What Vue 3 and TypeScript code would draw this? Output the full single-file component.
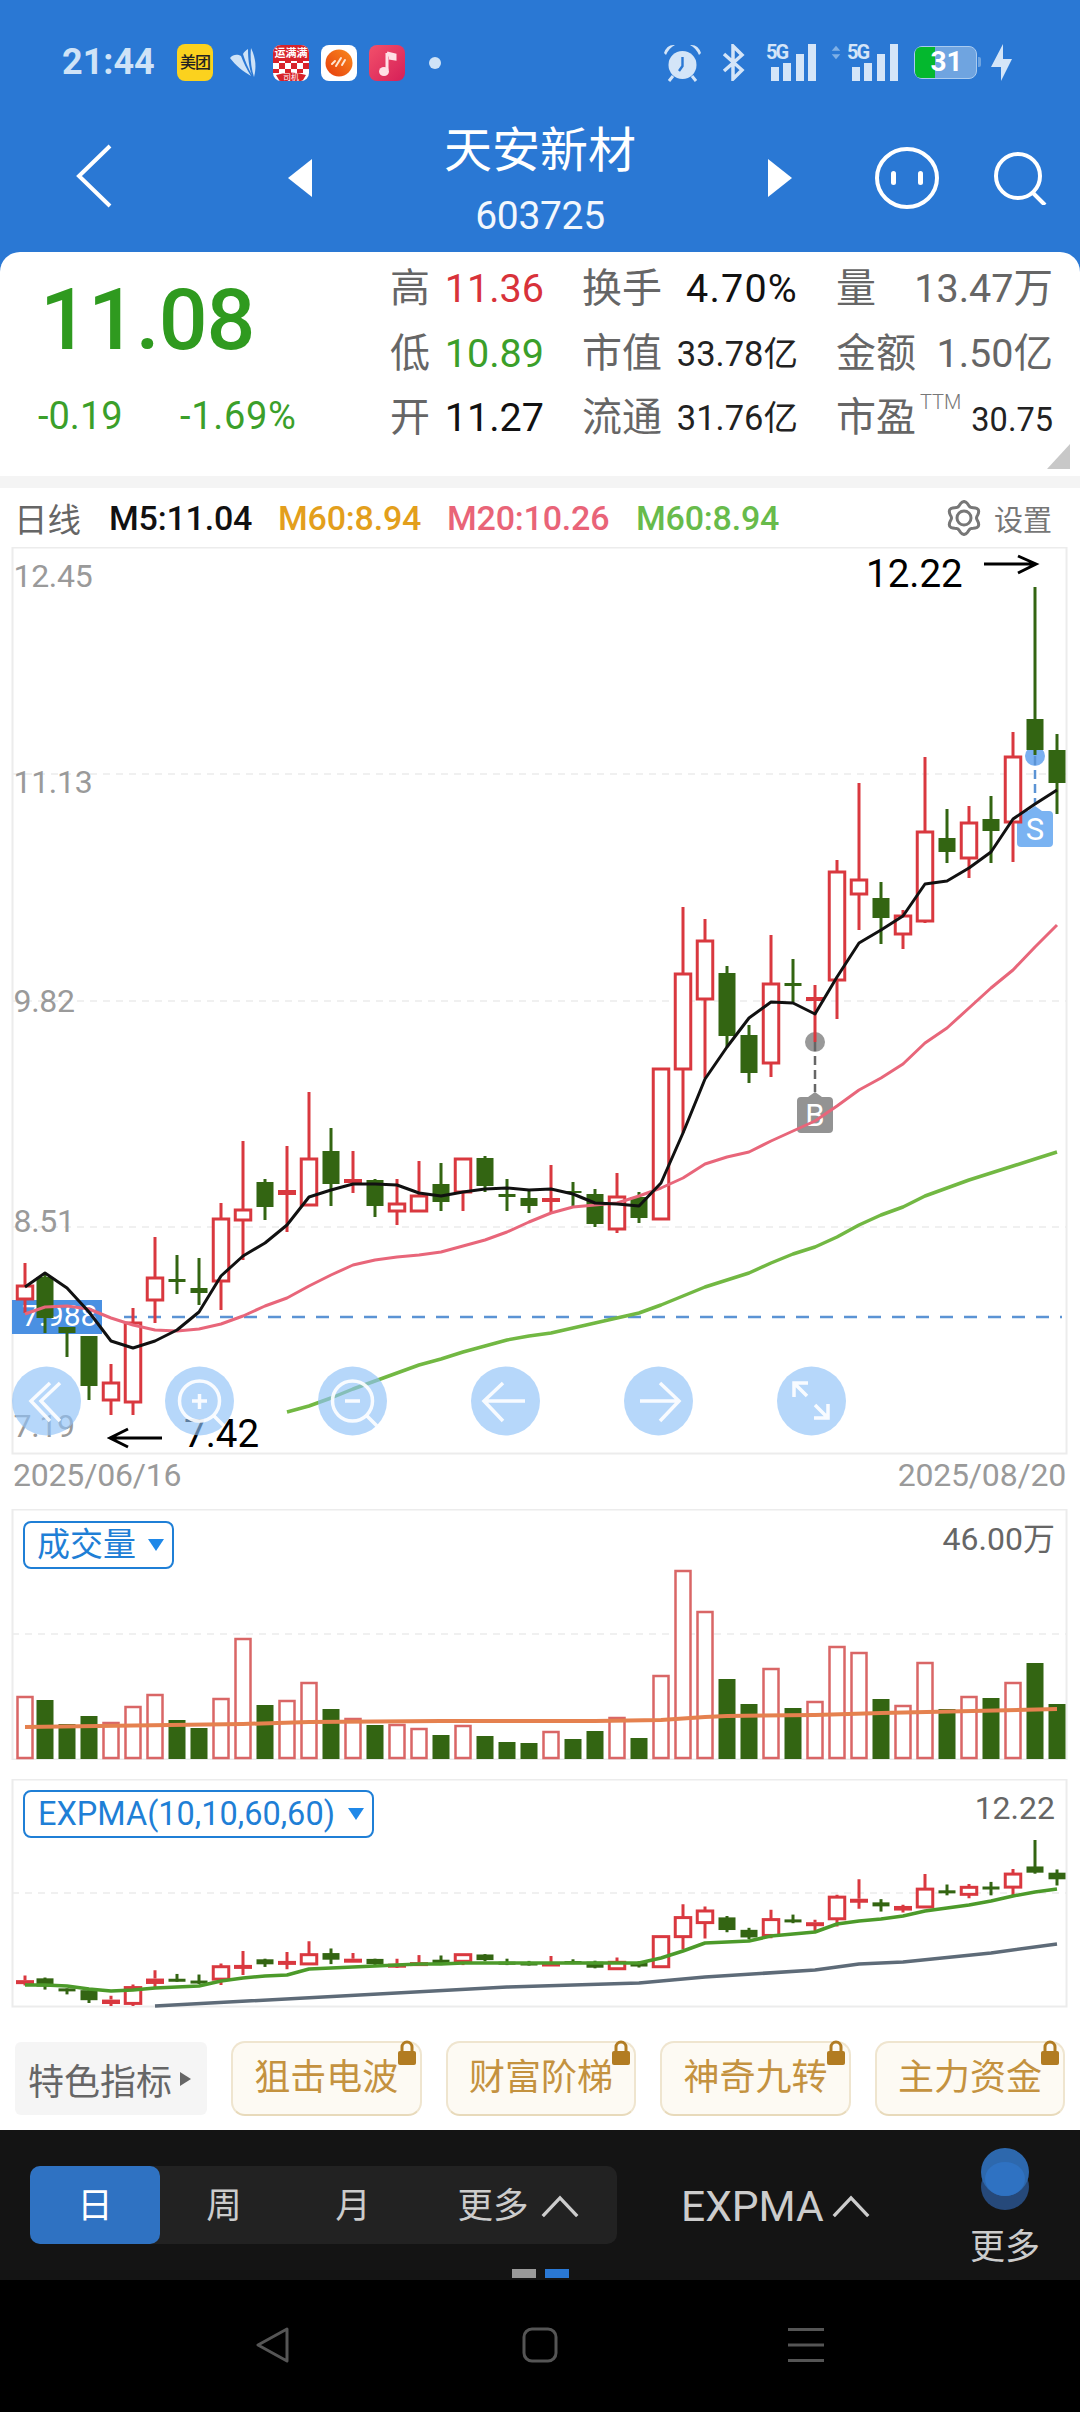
<script setup lang="ts">
type C = [number, number, number, number, number]
// [high, bodyTop, bodyBottom, low, isRed]
const raw: C[] = [
  [1263,1286,1299,1313,1],[1273,1277,1318,1333,0],[1327,1327,1333,1357,0],[1336,1336,1386,1400,0],
  [1364,1383,1400,1415,1],[1308,1323,1402,1415,1],[1237,1278,1300,1323,1],[1255,1279,1282,1294,0],
  [1258,1288,1293,1305,0],[1203,1219,1281,1310,1],[1141,1210,1220,1260,1],[1179,1182,1207,1220,0],
  [1146,1190,1194,1232,1],[1092,1159,1205,1205,1],[1128,1151,1184,1206,0],[1151,1179,1182,1193,1],
  [1179,1180,1206,1217,0],[1179,1204,1211,1225,1],[1161,1196,1211,1211,1],[1163,1184,1202,1211,0],
  [1159,1159,1192,1211,1],[1156,1158,1186,1192,0],[1179,1194,1197,1211,0],[1190,1198,1206,1213,0],
  [1165,1198,1201,1213,1],[1182,1191,1193,1206,0],[1189,1194,1224,1227,0],[1173,1197,1229,1233,1],
  [1192,1197,1218,1223,0],[1069,1069,1219,1219,1],[907,974,1069,1133,1],[919,941,999,1078,1],
  [966,973,1036,1047,0],[1025,1035,1073,1083,0],[935,984,1063,1077,1],[959,983,986,1002,0],
  [985,997,1000,1042,1],[860,872,980,1019,1],[783,880,894,930,1],[882,898,918,944,0],
  [910,916,934,949,1],[757,832,921,923,1],[809,838,852,863,0],[806,823,858,878,1],
  [796,819,831,863,0],[732,757,822,862,1],[587,719,750,755,0],[734,750,783,814,0],
]
const xOf = (i: number) => (i === 0 ? 25 : 23 + 22 * i)
const ema = (y: number) => 1840 + 0.2005 * (y - 587)
const priceCandles = raw.map((c, i) => ({ x: xOf(i), h: c[0], t: c[1], b: c[2], l: c[3], red: !!c[4] }))
const expCandles = raw.map((c, i) => ({ x: xOf(i), h: ema(c[0]), t: ema(c[1]), b: Math.max(ema(c[2]), ema(c[1]) + 3), l: ema(c[3]), red: !!c[4] }))

const toLine = (ys: number[], start = 0) => ys.map((y, i) => `${xOf(i + start)},${y}`).join(' ')
const black = toLine([1287,1273,1288,1312,1341,1348,1341,1330,1312,1276,1256,1243,1225,1197,1190,1184,1184,1185,1193,1196,1192,1189,1188,1190,1189,1194,1203,1204,1206,1183,1133,1079,1047,1018,1002,1003,1014,977,943,930,916,884,881,868,852,819,804,790])
const pink = toLine([1314,1307,1306,1309,1318,1325,1330,1331,1329,1324,1316,1306,1298,1286,1275,1265,1260,1257,1255,1252,1246,1240,1232,1222,1213,1207,1205,1203,1196,1188,1178,1164,1157,1152,1141,1131,1121,1106,1090,1078,1064,1043,1028,1008,988,970,947,925])
const green = toLine([1412,1406,1398,1389,1381,1373,1365,1359,1352,1346,1340,1336,1333,1328,1323,1318,1313,1305,1296,1287,1280,1273,1263,1254,1247,1237,1225,1215,1207,1196,1188,1180,1173,1166,1159,1152], 12)
const emaGreen = toLine([1985,1985,1986,1989,1991,1990,1988,1987,1986,1981,1978,1976,1975,1969,1968,1967,1966,1965,1964,1964,1963,1963,1963,1963,1963,1963,1963,1963,1963,1958,1951,1943,1942,1941,1936,1934,1932,1924,1921,1919,1916,1911,1908,1905,1901,1896,1892,1889])
const emaGray = '155,2006 507,1987 639,1983 705,1977 815,1970 859,1964 903,1962 991,1953 1057,1944'
const volLine = '25,1727 243,1724 309,1722 441,1721 595,1721 661,1720 705,1717 727,1716 815,1715 881,1713 1057,1709'
const volTops = [1697,1700,1724,1716,1723,1707,1695,1720,1728,1699,1639,1705,1701,1683,1709,1719,1725,1725,1729,1735,1726,1736,1742,1743,1732,1739,1731,1718,1738,1676,1571,1612,1679,1704,1669,1708,1702,1647,1653,1699,1706,1663,1709,1697,1698,1683,1663,1704]
const vols = volTops.map((t, i) => ({ x: xOf(i), t, red: !!raw[i][4] }))

const axis = [
  { t: '12.45', y: 587 }, { t: '11.13', y: 793 }, { t: '9.82', y: 1012 }, { t: '8.51', y: 1232 }, { t: '7.19', y: 1437 },
]
const stats = [
  [
    { l: '高', v: '11.36', c: 'red', s: '' },
    { l: '换手', v: '4.70%', c: 'ink', s: 'wide' },
    { l: '量', v: '13.47万', c: 'gray', s: '' },
  ],
  [
    { l: '低', v: '10.89', c: 'grn', s: '' },
    { l: '市值', v: '33.78亿', c: 'dark', s: 'small' },
    { l: '金额', v: '1.50亿', c: 'gray', s: '' },
  ],
  [
    { l: '开', v: '11.27', c: 'ink', s: '' },
    { l: '流通', v: '31.76亿', c: 'dark', s: 'small' },
    { l: '市盈', v: '30.75', c: 'dark', s: 'small pe', ttm: true },
  ],
]
const buttons = ['狙击电波', '财富阶梯', '神奇九转', '主力资金']
const legend = [
  { t: 'M5:11.04', c: 'lk' }, { t: 'M60:8.94', c: 'lo' }, { t: 'M20:10.26', c: 'lp' }, { t: 'M60:8.94', c: 'lg' },
]
const gear = (() => {
  const pts: string[] = []
  for (let a = 0; a < 360; a += 6) {
    const r = 14.5 + 2 * Math.cos((a * Math.PI) / 30)
    const th = (a * Math.PI) / 180
    pts.push(`${(18 + r * Math.sin(th)).toFixed(1)},${(18 - r * Math.cos(th)).toFixed(1)}`)
  }
  return pts.join(' ')
})()
</script>

<template>
  <div class="app">
    <header class="top">
      <div class="status">
        <span class="time">21:44</span>
        <span class="ico meituan">美团</span>
        <svg class="send" viewBox="0 0 26 30"><path d="M0 10C3 6 8 6 11 8C13 13 17 22 21 28C14 24 5 17 0 10Z" fill="#cfe3f7"/><path d="M13 6C14 4 16 2 18 1C18 10 19 20 22 27C18 20 15 13 13 6Z" fill="#cfe3f7"/><path d="M21 0C25 8 27 18 24 29C21 20 20 9 21 0Z" fill="#cfe3f7"/></svg>
        <svg class="app-r" viewBox="0 0 36 36"><defs><pattern id="chk" width="12" height="12" patternUnits="userSpaceOnUse"><rect width="12" height="12" fill="#fff"/><rect width="6" height="6" fill="#d8232a"/><rect x="6" y="6" width="6" height="6" fill="#d8232a"/></pattern></defs><rect width="36" height="36" rx="8" fill="#fff"/><path d="M8 0H28a8 8 0 0 1 8 8V16H0V8a8 8 0 0 1 8-8Z" fill="#d8232a"/><rect y="16" width="36" height="12" fill="url(#chk)"/><path d="M3 30Q18 25 33 30L30 35Q28 36 28 36H8Q6 36 6 35Z" fill="#d8232a"/><text class="tiny-a" x="18" y="12">运满满</text><text class="tiny-b" x="18" y="35">司机</text></svg>
        <svg class="app-o" viewBox="0 0 36 36"><defs><linearGradient id="org" x1="1" y1="0" x2="0" y2="1"><stop offset="0" stop-color="#f98a1e"/><stop offset="1" stop-color="#e63c0c"/></linearGradient></defs><rect width="36" height="36" rx="8" fill="#fff"/><circle cx="18" cy="18" r="13.500" fill="url(#org)"/><path d="M11 19l3-3M15 21l5-8M21 20l3-5" stroke="#ffe6d2" stroke-width="2" stroke-linecap="round"/></svg>
        <svg class="app-m" viewBox="0 0 36 36"><defs><linearGradient id="mus" x1="0" y1="0" x2="1" y2="1"><stop offset="0" stop-color="#f2506a"/><stop offset="1" stop-color="#d61f58"/></linearGradient></defs><rect width="36" height="36" rx="8" fill="url(#mus)"/><path d="M18 8V25M18 8L26 10V14L20 13" stroke="#ffdfe5" stroke-width="3" fill="#ffdfe5"/><ellipse cx="15" cy="26.500" rx="5" ry="4.500" fill="#ffdfe5"/></svg>
        <span class="dot"></span>
        <svg class="alarm" viewBox="0 0 37 38"><circle cx="18.5" cy="21" r="14" fill="#d4e5f8"/><path d="M18.5 13v9l-3.500 5" stroke="#2a78d4" stroke-width="2.4" fill="none"/><path d="M0 9Q3 0 11 1Q5 4 2 11ZM37 9Q34 0 26 1Q32 4 35 11Z" fill="#d4e5f8"/><path d="M9 32l-4 5M28 32l4 5" stroke="#d4e5f8" stroke-width="3"/></svg>
        <svg class="bt" viewBox="0 0 23 37"><path d="M2 10l18 16-9 9V2l9 9L2 27" stroke="#d4e5f8" stroke-width="3.500" fill="none"/></svg>
        <div class="sig s1">
          <span class="g5">5G</span>
          <svg viewBox="0 0 54 37"><path d="M7 23h8v14H7zM19 19h8v18h-8zM32 10h8v27h-8zM44 0h8v37h-8z" fill="#d4e5f8"/></svg>
        </div>
        <div class="sig s2">
          <svg class="updown" viewBox="0 0 14 16"><path d="M7 0l5 6H2zM7 16l5-6H2z" fill="#7fb0e6"/></svg>
          <span class="g5">5G</span>
          <svg viewBox="0 0 54 37"><path d="M8 23h8v14H8zM20 19h8v18h-8zM33 10h8v27h-8zM46 0h8v37h-8z" fill="#d4e5f8"/></svg>
        </div>
        <div class="battery"><span class="charge"></span><span class="bnum">31</span><i class="cap"></i></div>
        <svg class="bolt" viewBox="0 0 21 37"><path d="M12 0L0 23H10V37L21 15H12Z" fill="#d4e5f8"/></svg>
      </div>
      <div class="titlebar">
        <svg class="back" viewBox="0 0 36 64"><path d="M34 2L3 32l31 30" stroke="#fff" stroke-width="4" fill="none"/></svg>
        <svg class="tri tl" viewBox="0 0 24 38"><path d="M24 0v38L0 19z" fill="#fff"/></svg>
        <div class="titles">
          <div class="name">天安新材</div>
          <div class="code">603725</div>
        </div>
        <svg class="tri" viewBox="0 0 24 38"><path d="M0 0v38l24-19z" fill="#fff"/></svg>
        <svg class="face" viewBox="0 0 64 62"><ellipse cx="32" cy="31" rx="30" ry="29" fill="none" stroke="#fff" stroke-width="4"/><rect x="16" y="24" width="5" height="14" rx="2.500" fill="#fff"/><rect x="43" y="24" width="5" height="14" rx="2.500" fill="#fff"/></svg>
        <svg class="search" viewBox="0 0 54 54"><circle cx="25" cy="25" r="22" fill="none" stroke="#fff" stroke-width="4"/><path d="M39 41l13 13" stroke="#fff" stroke-width="4"/></svg>
      </div>
    </header>

    <section class="quote">
      <div class="q-left">
        <div class="price">11.08</div>
        <div class="chg"><span>-0.19</span><span>-1.69%</span></div>
      </div>
      <div class="q-grid">
        <template v-for="(row, r) in stats" :key="r">
          <div v-for="cell in row" :key="cell.l" class="cell">
            <span class="lab">{{ cell.l }}<sup v-if="cell.ttm" class="ttm">TTM</sup></span>
            <span class="val" :class="[cell.c, cell.s]">{{ cell.v }}</span>
          </div>
        </template>
      </div>
      <svg class="corner" viewBox="0 0 23 25"><path d="M23 0v25H0z" fill="#c8c8c8"/></svg>
    </section>
    <div class="sep"></div>

    <div class="legend">
      <span class="lg-title">日线</span>
      <span v-for="(m, i) in legend" :key="i" class="lg-item" :class="m.c">{{ m.t }}</span>
      <div class="setting">
        <svg class="gear" viewBox="0 0 36 36"><polygon :points="gear" fill="none" stroke="#777" stroke-width="3"/><circle cx="18" cy="18" r="7" fill="none" stroke="#777" stroke-width="3"/></svg>
        <span>设置</span>
      </div>
    </div>

    <svg class="panel p-price" viewBox="0 547 1080 908">
      <rect class="frame" x="12.5" y="547.5" width="1054" height="906"/>
      <path class="grid" d="M12 774H1066M12 1001H1066M12 1227H1066"/>
      <text v-for="a in axis" :key="a.t" class="axis" x="13.500" :y="a.y">{{ a.t }}</text>
      <rect x="12" y="1300" width="90" height="34" fill="#4a90e2"/>
      <text class="tag" x="22" y="1326">7.988</text>
      <path d="M124 1317H1062" stroke="#5b93d4" stroke-width="2.5" stroke-dasharray="13 11" fill="none"/>

      <circle cx="1035" cy="756" r="10" fill="#7ab0f0"/>
      <path d="M1035 756V805" stroke="#5b93d4" stroke-width="2.5" stroke-dasharray="9 5" fill="none"/>
      <path d="M1021 811H1028L1035 806L1042 811H1049a4 4 0 0 1 4 4V843a4 4 0 0 1-4 4H1021a4 4 0 0 1-4-4V815a4 4 0 0 1 4-4Z" fill="#7ab3f2"/>
      <text class="mark" x="1035" y="840">S</text>
      <circle cx="815" cy="1042" r="10" fill="#999"/>
      <path d="M815 1042V1092" stroke="#666" stroke-width="2.5" stroke-dasharray="9 5" fill="none"/>
      <path d="M801 1097H808L815 1092L822 1097H829a4 4 0 0 1 4 4V1129a4 4 0 0 1-4 4H801a4 4 0 0 1-4-4V1101a4 4 0 0 1 4-4Z" fill="#939393"/>
      <text class="mark" x="815" y="1126">B</text>

      <g v-for="c in priceCandles" :key="c.x">
        <template v-if="c.red">
          <path :d="`M${c.x} ${c.h}V${c.t}M${c.x} ${c.b}V${c.l}`" stroke="#d9383f" stroke-width="3" fill="none"/>
          <rect v-if="c.b - c.t > 5" :x="c.x - 7.75" :y="c.t" width="15.5" :height="c.b - c.t" fill="#fff" stroke="#d9383f" stroke-width="3"/>
          <rect v-else :x="c.x - 9" :y="c.t" width="18" :height="c.b - c.t + 1" fill="#d9383f"/>
        </template>
        <template v-else>
          <path :d="`M${c.x} ${c.h}V${c.l}`" stroke="#336512" stroke-width="3" fill="none"/>
          <rect :x="c.x - 8.5" :y="c.t" width="17" :height="c.b - c.t" fill="#336512"/>
        </template>
      </g>

      <polyline :points="green" class="ln" stroke="#72b843" stroke-width="3.5"/>
      <polyline :points="pink" class="ln" stroke="#e8667a" stroke-width="3"/>
      <polyline :points="black" class="ln" stroke="#111" stroke-width="3"/>

      <text class="big" x="866" y="587">12.22</text>
      <path d="M984 564H1036M1018 556L1036 564L1018 573" class="arr"/>
      <text class="big" x="184" y="1447">7.42</text>
      <path d="M162 1438H110M128 1429L110 1438L128 1447" class="arr"/>

      <g class="fab">
        <circle cx="46.5" cy="1401" r="34.5"/>
        <circle cx="199.5" cy="1401" r="34.5"/>
        <circle cx="352.5" cy="1401" r="34.5"/>
        <circle cx="505.5" cy="1401" r="34.5"/>
        <circle cx="658.5" cy="1401" r="34.5"/>
        <circle cx="811.5" cy="1401" r="34.5"/>
      </g>
      <g class="fab-i">
        <path d="M50 1383L31 1401L50 1421M60 1383L41 1401L60 1421"/>
        <circle cx="199.5" cy="1401" r="20"/>
        <path d="M214 1416L224 1426M192 1401H207M199.5 1394V1409"/>
        <circle cx="352.5" cy="1401" r="20"/>
        <path d="M367 1416L377 1426M345 1401H360"/>
        <path d="M525 1401H485M503 1383L484 1401L503 1421"/>
        <path d="M640 1401H678M660 1383L679 1401L660 1421"/>
        <path d="M794 1397V1383H808M794 1383L807 1396M828 1404V1418H814M828 1418L815 1405"/>
      </g>
    </svg>

    <div class="dates"><span>2025/06/16</span><span>2025/08/20</span></div>

    <div class="sub vol">
      <svg class="panel p-vol" viewBox="0 1509 1080 251">
        <rect class="frame" x="12.5" y="1509.5" width="1054" height="250"/>
        <path class="grid" d="M12 1634H1066"/>
        <g v-for="v in vols" :key="v.x">
          <rect v-if="v.red" :x="v.x - 7.5" :y="v.t" width="15" :height="1758 - v.t" fill="#fff" stroke="#d96666" stroke-width="2.5"/>
          <rect v-else :x="v.x - 8.5" :y="v.t" width="17" :height="1759 - v.t" fill="#336512"/>
        </g>
        <polyline :points="volLine" class="ln" stroke="#e5814f" stroke-width="4"/>
        <text class="sub-v" x="1055" y="1550">46.00万</text>
      </svg>
      <div class="pick pick-v"><span>成交量</span><i></i></div>
    </div>

    <div class="sub exp">
      <svg class="panel p-exp" viewBox="0 1779 1080 229">
        <rect class="frame" x="12.5" y="1779.5" width="1054" height="227"/>
        <path class="grid" d="M12 1893H1066"/>
        <g v-for="c in expCandles" :key="c.x">
          <template v-if="c.red">
            <path :d="`M${c.x} ${c.h}V${c.t}M${c.x} ${c.b}V${c.l}`" stroke="#d9383f" stroke-width="3" fill="none"/>
            <rect v-if="c.b - c.t > 5" :x="c.x - 7.75" :y="c.t" width="15.5" :height="c.b - c.t" fill="#fff" stroke="#d9383f" stroke-width="3"/>
            <rect v-else :x="c.x - 9" :y="c.t" width="18" :height="c.b - c.t + 1" fill="#d9383f"/>
          </template>
          <template v-else>
            <path :d="`M${c.x} ${c.h}V${c.l}`" stroke="#336512" stroke-width="3" fill="none"/>
            <rect :x="c.x - 8.5" :y="c.t" width="17" :height="c.b - c.t" fill="#336512"/>
          </template>
        </g>
        <polyline :points="emaGreen" class="ln" stroke="#4c9a2a" stroke-width="3.5"/>
        <polyline :points="emaGray" class="ln" stroke="#5e6b78" stroke-width="3.5"/>
        <text class="sub-v" x="1055" y="1819">12.22</text>
      </svg>
      <div class="pick pick-e"><span>EXPMA(10,10,60,60)</span><i></i></div>
    </div>

    <div class="indicators">
      <div class="feat"><span>特色指标</span><i></i></div>
      <div v-for="b in buttons" :key="b" class="gold">
        <span>{{ b }}</span>
        <svg class="lock" viewBox="0 0 20 26"><path d="M5 13V7a5 5 0 0 1 10 0v6" fill="none" stroke="#b27c22" stroke-width="3"/><rect x="1" y="11" width="18" height="14" rx="2" fill="#b27c22"/></svg>
      </div>
    </div>

    <div class="bar">
      <div class="bar-main">
        <div class="tabs">
          <div class="tab on">日</div>
          <div class="tab t2">周</div>
          <div class="tab t3">月</div>
          <div class="tab more">更多<svg class="up" viewBox="0 0 40 24"><path d="M2 22L20 3l18 19" fill="none" stroke="#ccc" stroke-width="3.5"/></svg></div>
        </div>
        <div class="ind">EXPMA<svg class="up" viewBox="0 0 40 24"><path d="M2 22L20 3l18 19" fill="none" stroke="#ccc" stroke-width="3.5"/></svg></div>
        <div class="morebtn">
          <svg class="blob" viewBox="0 0 48 62"><ellipse cx="24" cy="39" rx="24" ry="23" fill="#26497a"/><ellipse cx="24" cy="24" rx="24" ry="24" fill="#2d68ad"/><ellipse cx="24" cy="31" rx="20" ry="17" fill="#2f72c2"/></svg>
          <span>更多</span>
        </div>
      </div>
      <div class="pager"><i class="pg"></i><i class="pb"></i></div>
    </div>

    <nav class="nav">
      <svg class="n1" viewBox="0 0 35 36"><path d="M32 2L3 18l29 16z" fill="none" stroke="#555" stroke-width="3" stroke-linejoin="round"/></svg>
      <svg class="n2" viewBox="0 0 36 36"><rect x="2" y="2" width="32" height="32" rx="8" fill="none" stroke="#555" stroke-width="3"/></svg>
      <svg class="n3" viewBox="0 0 36 36"><path d="M0 2.500H36M0 18H36M0 33.500H36" stroke="#555" stroke-width="3"/></svg>
    </nav>
  </div>
</template>

<style scoped>
.app {
  width: 1080px;
  height: 2412px;
  background: #fff;
  overflow: hidden;
  display: flex;
  flex-direction: column;
  font-family: Roboto, "Noto Sans CJK SC", sans-serif;
}
.top { height: 272px; background: #2a78d4; flex: none; }
.status { display: flex; align-items: center; height: 37px; padding: 44px 0 0 62px; }
.time { width: 92px; font-size: 36px; line-height: 37px; font-weight: 700; color: #cfe3f7; margin-top: -1px; }
.ico, .status svg { flex: none; display: block; }
.meituan {
  width: 36px; height: 37px; margin-left: 23px; border-radius: 8px; background: #fbd21e; color: #222;
  font-size: 16px; line-height: 37px; text-align: center; font-weight: 500; letter-spacing: -1px;
}
.send { width: 26px; height: 30px; margin-left: 17px; }
.app-r { width: 36px; height: 36px; margin-left: 17px; }
.app-o { width: 36px; height: 36px; margin-left: 12px; }
.app-m { width: 36px; height: 36px; margin-left: 12px; }
.tiny-a { font-size: 11px; font-weight: 700; fill: #fff; text-anchor: middle; }
.tiny-b { font-size: 8px; fill: #fff; text-anchor: middle; }
.dot { width: 12px; height: 12px; border-radius: 50%; background: #cfe3f7; margin-left: 24px; }
.alarm { width: 37px; height: 38px; margin-left: 223px; }
.bt { width: 23px; height: 37px; margin-left: 21px; }
.sig { position: relative; height: 37px; }
.sig svg { position: absolute; right: 0; bottom: 0; width: 54px; height: 37px; }
.s1 { width: 54px; margin-left: 19px; }
.s2 { width: 68px; margin-left: 12px; }
.sig .updown { left: 0; top: 1px; width: 12px; height: 15px; right: auto; bottom: auto; }
.g5 { position: absolute; top: 0; color: #d4e5f8; font-size: 20px; line-height: 16px; font-weight: 700; letter-spacing: -2px; z-index: 1; }
.s1 .g5 { left: 2px; }
.s2 .g5 { left: 17px; }
.battery {
  position: relative; width: 63px; height: 33px; margin-left: 16px; border-radius: 8px; background: #6fa4e0;
  box-sizing: border-box; border: 1.500px solid #a9cbf0; text-align: center;
}
.charge { position: absolute; left: 0; top: 0; bottom: 0; width: 20px; background: #04b82e; border-radius: 6px 0 0 6px; }
.bnum { position: relative; font-size: 28px; line-height: 30px; color: #fff; font-weight: 700; display: block; padding-left: 2px; }
.cap { position: absolute; right: -5px; top: 10px; width: 3px; height: 10px; background: #6fa4e0; border-radius: 0 2px 2px 0; }
.bolt { width: 21px; height: 37px; margin-left: 14px; }

.titlebar { display: flex; align-items: center; height: 116px; margin-top: 39px; padding-left: 76px; }
.titlebar svg { display: block; flex: none; }
.back { width: 36px; height: 64px; margin-top: -4px; }
.tri { width: 24px; height: 38px; }
.tl { margin-left: 176px; }
.titles { width: 456px; align-self: flex-start; text-align: center; color: #fff; }
.name { font-size: 48px; line-height: 62px; }
.code { font-size: 39px; line-height: 68px; letter-spacing: -0.3px; color: #f2f7fd; }
.face { width: 64px; height: 62px; margin-left: 83px; }
.search { width: 54px; height: 54px; margin-left: 54px; }

.quote {
  position: relative; flex: none; display: flex; height: 224px; margin-top: -20px; background: #fff;
  border-radius: 20px 20px 0 0;
}
.q-left { width: 390px; flex: none; padding-left: 38px; box-sizing: border-box; }
.price {
  margin: 22px 0 0 2px; font-size: 86px; line-height: 92px; font-weight: 500; color: #2f9a1f; letter-spacing: -1px;
}
.chg { display: flex; margin-top: 27px; font-size: 38px; line-height: 46px; color: #3b9f2a; }
.chg span:first-child { width: 142px; }
.chg span:last-child { letter-spacing: 0.7px; }
.q-grid {
  display: grid; grid-template-columns: 154px 216px 217px; column-gap: 38px; grid-auto-rows: 64.500px;
  padding-top: 5px; align-content: start;
}
.cell { display: flex; justify-content: space-between; align-items: center; }
.lab { position: relative; font-size: 40px; color: #666; line-height: 60px; white-space: nowrap; }
.val { font-size: 39.500px; line-height: 60px; white-space: nowrap; }
.val.wide { letter-spacing: 1.200px; }
.val.small { font-size: 34.500px; }
.val.pe { font-size: 32.500px; margin-top: 3px; }
.ttm { position: absolute; left: 84px; top: 4px; font-size: 20px; line-height: 20px; color: #777; font-weight: 300; vertical-align: baseline; }
.red { color: #d8323a; }
.grn { color: #3b9f2a; }
.ink { color: #111; }
.dark { color: #222; }
.gray { color: #666; }
.corner { position: absolute; right: 10px; top: 192px; width: 23px; height: 25px; }
.sep { flex: none; height: 12px; background: #f4f4f4; }

.legend { flex: none; height: 59px; display: flex; align-items: center; padding-left: 14px; position: relative; }
.lg-title { font-size: 33.500px; color: #666; width: 95px; }
.lg-item { font-size: 34px; font-weight: 500; width: 169px; letter-spacing: -0.2px; white-space: nowrap; }
.lk { color: #111; width: 169px; }
.lo { color: #e39f1c; width: 169px; }
.lp { color: #e96478; width: 189px; }
.lg { color: #68bb4b; }
.setting { margin-left: auto; margin-right: 28px; display: flex; align-items: center; color: #777; font-size: 29px; }
.gear { width: 36px; height: 36px; margin-right: 12px; display: block; }

.panel { display: block; flex: none; width: 1080px; }
.p-price { height: 908px; }
.p-vol { height: 251px; }
.p-exp { height: 229px; }
.frame { fill: none; stroke: #ececec; stroke-width: 2; }
.grid { fill: none; stroke: #ececec; stroke-width: 1.500; stroke-dasharray: 7 6; }
.axis { font-size: 32px; fill: #9a9a9a; letter-spacing: -0.3px; }
.tag { font-size: 30px; fill: #fff; }
.mark { font-size: 31px; fill: #fff; text-anchor: middle; }
.ln { fill: none; stroke-linejoin: round; }
.big { font-size: 38.500px; fill: #000; }
.arr { fill: none; stroke: #000; stroke-width: 3; }
.fab circle { fill: #8fc1f8; fill-opacity: 0.65; }
.fab-i { fill: none; stroke: #fff; stroke-width: 3.500; stroke-opacity: 0.9; }
.fab-i circle { fill: none; }

.dates {
  flex: none; height: 40px; margin-bottom: 14px; padding: 0 14px 0 13px; display: flex; justify-content: space-between;
  align-items: center; font-size: 32px; color: #9a9a9a; letter-spacing: -0.2px;
}
.sub { position: relative; flex: none; }
.exp { margin-top: 19px; }
.sub-v { font-size: 32px; fill: #666; text-anchor: end; }
.pick {
  position: absolute; left: 23px; top: 12px; height: 48px; box-sizing: border-box; border: 2px solid #1f7fd6;
  border-radius: 8px; color: #1f7fd6; font-size: 33px; line-height: 44px; padding-left: 12px; white-space: nowrap;
  background: #fff; display: flex; align-items: center;
}
.pick i { width: 0; height: 0; border-left: 8px solid transparent; border-right: 8px solid transparent; border-top: 12px solid #1f88e8; }
.pick-v { width: 151px; }
.pick-v i { margin-left: 12px; }
.pick-e { width: 351px; top: 11px; font-size: 32.500px; padding-left: 13px; }
.pick-e i { margin-left: 13px; }

.indicators { flex: none; height: 122px; box-sizing: border-box; display: flex; padding: 33px 0 0 15px; }
.feat {
  width: 192px; height: 73px; margin-top: 1px; background: #f5f5f5; border-radius: 6px; display: flex; align-items: center;
  padding-left: 13px; box-sizing: border-box; color: #666; font-size: 36px; white-space: nowrap;
}
.feat i { width: 0; height: 0; margin-left: 8px; border-top: 7px solid transparent; border-bottom: 7px solid transparent; border-left: 11px solid #666; }
.gold {
  position: relative; width: 190.600px; height: 75px; margin-left: 24px; box-sizing: border-box; flex: none;
  background: #fdfaf3; border: 2px solid #efe5cf; border-bottom-color: #e8dabb; border-radius: 14px;
  color: #c4923f; font-size: 36px; line-height: 71px; text-align: center; white-space: nowrap;
}
.lock { position: absolute; right: 3px; top: -3px; width: 20px; height: 26px; display: block; }

.bar { flex: none; height: 150px; background: #141414; display: flex; flex-direction: column; }
.bar-main { flex: none; height: 139px; display: flex; align-items: flex-start; }
.tabs {
  margin: 36px 0 0 30px; width: 587px; height: 78px; display: flex; background: #222; border-radius: 10px;
  color: #ccc; font-size: 35.500px; line-height: 80px; text-align: center; flex: none;
}
.tab { flex: none; }
.tab.on { width: 130px; background: #2f72c2; border-radius: 10px; color: #fff; }
.t2 { width: 128px; }
.t3 { width: 130px; }
.more { width: 199px; display: flex; align-items: center; justify-content: center; padding: 2px 0 0 2px; box-sizing: border-box; }
.up { width: 40px; height: 23px; margin-left: 11px; display: block; }
.ind { margin: 36px 0 0 64px; padding-top: 2px; box-sizing: border-box; display: flex; align-items: center; height: 78px; color: #ccc; font-size: 42.500px; }
.ind .up { margin-left: 7px; }
.morebtn { margin: 18px 40px 0 auto; width: 70px; display: flex; flex-direction: column; align-items: center; color: #ccc; font-size: 35px; line-height: 52px; }
.blob { width: 48px; height: 62px; display: block; }
.morebtn span { margin-top: 12px; }
.pager { display: flex; justify-content: center; gap: 9px; }
.pager i { width: 24px; height: 9px; display: block; }
.pg { background: #999; }
.pb { background: #2a78d4; }

.nav { flex: 1; background: #000; display: flex; padding: 47px 0 0 255px; align-items: flex-start; }
.nav svg { display: block; flex: none; height: 36px; }
.n1 { width: 35px; }
.n2 { width: 36px; margin-left: 232px; }
.n3 { width: 36px; margin-left: 230px; }
</style>
